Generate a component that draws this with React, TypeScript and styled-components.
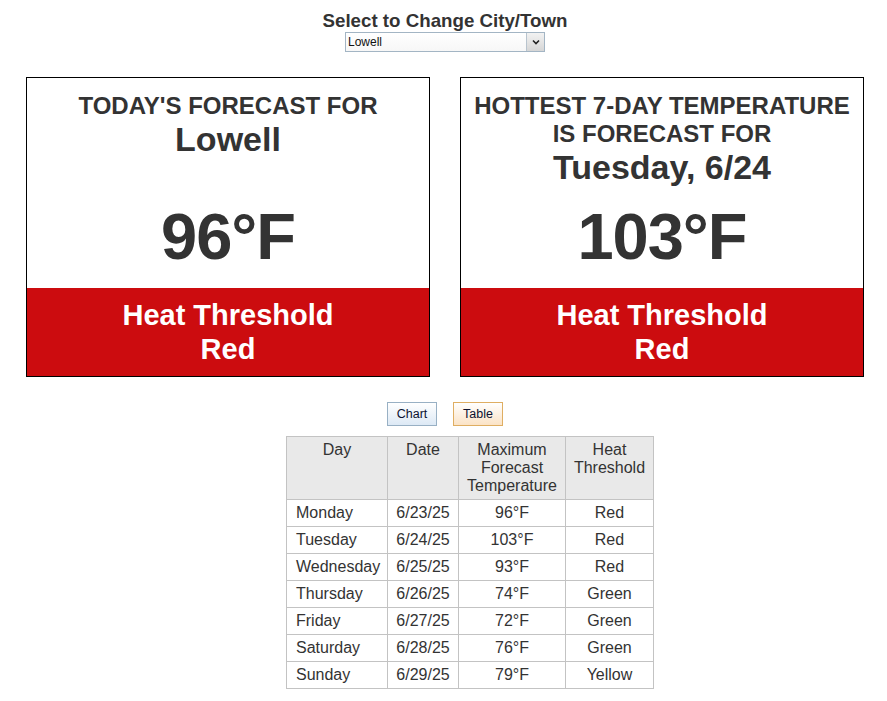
import React from 'react';
import styled, { createGlobalStyle } from 'styled-components';

const GlobalStyle = createGlobalStyle`
  body {
    margin: 0;
    background: #ffffff;
    font-family: "Liberation Sans", Arial, sans-serif;
    color: #333333;
  }
`;

interface IDay {
  day: string;
  date: string;
  temp: string;
  threshold: string;
}

const DAYS: IDay[] = [
  { day: 'Monday', date: '6/23/25', temp: '96°F', threshold: 'Red' },
  { day: 'Tuesday', date: '6/24/25', temp: '103°F', threshold: 'Red' },
  { day: 'Wednesday', date: '6/25/25', temp: '93°F', threshold: 'Red' },
  { day: 'Thursday', date: '6/26/25', temp: '74°F', threshold: 'Green' },
  { day: 'Friday', date: '6/27/25', temp: '72°F', threshold: 'Green' },
  { day: 'Saturday', date: '6/28/25', temp: '76°F', threshold: 'Green' },
  { day: 'Sunday', date: '6/29/25', temp: '79°F', threshold: 'Yellow' },
];

interface ICard {
  heading: string[];
  subject: string;
  temp: string;
  level: string;
}

const ForecastCard: React.FC<ICard> = ({ heading, subject, temp, level }) => {
  return (
    <Card>
      <CardTop>
        <CardHeader>
          {heading.map((line) => (
            <HeadLine key={line}>{line}</HeadLine>
          ))}
          <Subject>{subject}</Subject>
        </CardHeader>
        <Temp>{temp}</Temp>
      </CardTop>
      <Band>
        Heat Threshold
        <br />
        {level}
      </Band>
    </Card>
  );
};

export default function App() {
  return (
    <Page>
      <GlobalStyle />
      <PickerBlock>
        <PickerTitle>Select to Change City/Town</PickerTitle>
        <Select>
          <SelectValue>Lowell</SelectValue>
          <SelectArrow>
            <svg width="8" height="6" viewBox="0 0 8 6">
              <path d="M1 1.5 L4 4.5 L7 1.5" fill="none" stroke="#222" strokeWidth="1.6" />
            </svg>
          </SelectArrow>
        </Select>
      </PickerBlock>

      <Cards>
        <ForecastCard
          heading={["TODAY'S FORECAST FOR"]}
          subject="Lowell"
          temp="96°F"
          level="Red"
        />
        <ForecastCard
          heading={['HOTTEST 7-DAY TEMPERATURE', 'IS FORECAST FOR']}
          subject="Tuesday, 6/24"
          temp="103°F"
          level="Red"
        />
      </Cards>

      <Toggle>
        <ToggleButton variant="chart">Chart</ToggleButton>
        <ToggleButton variant="table">Table</ToggleButton>
      </Toggle>

      <TableWrap>
        <Table>
          <thead>
            <tr>
              <Th width={101}>Day</Th>
              <Th width={71}>Date</Th>
              <Th width={107}>
                Maximum
                <br />
                Forecast
                <br />
                Temperature
              </Th>
              <Th width={88}>
                Heat
                <br />
                Threshold
              </Th>
            </tr>
          </thead>
          <tbody>
            {DAYS.map((d) => (
              <tr key={d.day}>
                <Td align="left">{d.day}</Td>
                <Td>{d.date}</Td>
                <Td>{d.temp}</Td>
                <Td>{d.threshold}</Td>
              </tr>
            ))}
          </tbody>
        </Table>
      </TableWrap>
    </Page>
  );
}

const Page = styled.div`
  display: flex;
  flex-direction: column;
  align-items: center;

  padding: 10px 0 12px 3px;
`;

const PickerBlock = styled.div`
  display: flex;
  flex-direction: column;
  align-items: center;
`;

const PickerTitle = styled.h3`
  margin: 0;

  font-size: 18.72px;
  font-weight: 700;
  line-height: 22px;
  color: #333333;
`;

const Select = styled.div`
  display: flex;
  align-items: stretch;

  width: 200px;
  height: 20px;
  box-sizing: border-box;

  border: 1px solid #a3b5c4;
  background: linear-gradient(#ffffff, #f7f7f7);
`;

const SelectValue = styled.span`
  flex: 1;

  padding-left: 2px;

  font-size: 12px;
  line-height: 18px;
  color: #111111;
`;

const SelectArrow = styled.span`
  display: flex;
  align-items: center;
  justify-content: center;

  width: 17px;

  border-left: 1px solid #b8c4ce;
  background: linear-gradient(#f2f2f2, #d6d6d6);
`;

const Cards = styled.div`
  display: flex;
  gap: 30px;

  margin-top: 25px;
`;

const Card = styled.div`
  display: flex;
  flex-direction: column;

  width: 404px;
  height: 300px;
  box-sizing: border-box;

  border: 1px solid #000000;
  background: #ffffff;
`;

const CardTop = styled.div`
  display: flex;
  flex-direction: column;
  align-items: center;

  height: 210px;
`;

const CardHeader = styled.div`
  display: flex;
  flex-direction: column;
  align-items: center;

  height: 108px;
  padding-top: 14px;
`;

const HeadLine = styled.div`
  font-size: 24px;
  font-weight: 700;
  line-height: 28px;
  text-transform: uppercase;
  color: #333333;
`;

const Subject = styled.div`
  font-size: 34px;
  font-weight: 700;
  line-height: 38px;
  color: #333333;
`;

const Temp = styled.div`
  font-size: 65px;
  font-weight: 700;
  line-height: 74px;
  letter-spacing: -1px;
  color: #333333;
`;

const Band = styled.div`
  flex: 1;

  padding: 10px 0;

  background: #cc0c0f;

  font-size: 29px;
  font-weight: 700;
  line-height: 34px;
  text-align: center;
  color: #ffffff;
`;

const Toggle = styled.div`
  display: flex;
  gap: 16px;

  margin-top: 25px;
`;

const ToggleButton = styled.button<{ variant: 'chart' | 'table' }>`
  width: 50px;
  height: 24px;
  padding: 0;

  border: 1px solid ${({ variant }) => (variant === 'chart' ? '#98b0c4' : '#dfae62')};
  border-radius: 0;
  background: ${({ variant }) =>
    variant === 'chart'
      ? 'linear-gradient(#ffffff, #dde9f5)'
      : 'linear-gradient(#ffffff, #fbe3c6)'};

  font-family: "Liberation Sans", Arial, sans-serif;
  font-size: 12.5px;
  color: #0c1230;
`;

const TableWrap = styled.div`
  margin-top: 10px;
  padding-left: 50px;
`;

const Table = styled.table`
  border-collapse: collapse;

  font-size: 16px;
  color: #333333;
`;

const Th = styled.th<{ width: number }>`
  width: ${({ width }) => width}px;
  padding: 4px 0 4px;
  box-sizing: border-box;

  border: 1px solid #c3c3c3;
  background: #e9e9e9;

  font-weight: 400;
  line-height: 18px;
  vertical-align: top;
  text-align: center;
`;

const Td = styled.td<{ align?: 'left' | 'center' }>`
  height: 27px;
  padding: 0 0 0 ${({ align }) => (align === 'left' ? '9px' : '0')};
  box-sizing: border-box;

  border: 1px solid #c3c3c3;

  line-height: 18px;
  text-align: ${({ align }) => align || 'center'};
  white-space: nowrap;
`;
